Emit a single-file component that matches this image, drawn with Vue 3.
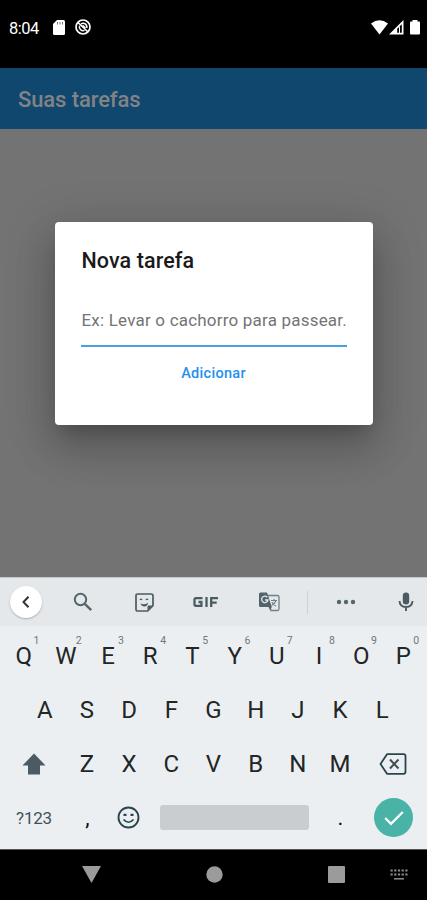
<template>
	<div class="phone">
		<header class="status">
			<span class="clock">8:04</span>
			<svg class="sd" viewBox="0 0 12 15">
				<path d="M4 0h6.500q1.500 0 1.500 1.500v12q0 1.500-1.500 1.500h-9q-1.500 0-1.500-1.500V4z" fill="#fff" />
				<path d="M4.500 2v2.500M7 2v2.500M9.500 2v2.500" stroke="#777" stroke-width="1" />
			</svg>
			<svg class="sync" viewBox="0 0 16 16" fill="none" stroke="#fff">
				<circle cx="8" cy="8" r="7" stroke-width="1.700" />
				<path d="M3 3.500l10 9.500" stroke-width="1.700" />
				<path d="M6 4.800a3.800 3.800 0 0 1 5.700 4.200M4.500 6.800a3.800 3.800 0 0 0 5 4.600M7.500 6.300l3 2.500" stroke-width="1.500" />
			</svg>
			<div class="status__right">
				<svg class="wifi" viewBox="0 0 17 15"><path d="M0 3.500Q8.500-3 17 3.500L8.500 14.500z" fill="#fff" /></svg>
				<svg class="signal" viewBox="0 0 15 15">
					<path d="M0 14.500L14.500 0v14.500z" fill="#fff" />
					<path d="M8.200 12.800V8.800l4.600-4.600v8.600z" fill="#000" />
					<path d="M10.500 6.500v6.500" stroke="#fff" stroke-width="1" />
				</svg>
				<svg class="battery" viewBox="0 0 10 15"><path d="M2.500 1.500V0h5v1.500H9q1 0 1 1V13.500q0 1-1 1H1q-1 0-1-1v-11q0-1 1-1z" fill="#fff" /></svg>
			</div>
		</header>

		<div class="appbar"><h1>Suas tarefas</h1></div>

		<main class="screen">
			<section class="dialog">
				<h2>Nova tarefa</h2>
				<div class="field"><span>Ex: Levar o cachorro para passear.</span></div>
				<button class="add">Adicionar</button>
			</section>
		</main>

		<section class="keyboard">
			<div class="tools">
				<span class="back">
					<svg width="10" height="14" viewBox="0 0 10 14"><path d="M7.500 1.800L2.500 7l5 5.200" fill="none" stroke="#303638" stroke-width="2" /></svg>
				</span>
				<svg width="20" height="20" viewBox="0 0 20 20" fill="none" stroke="#56666d">
					<circle cx="7.500" cy="7.500" r="5.700" stroke-width="2" />
					<path d="M11.800 11.800l6.400 6.400" stroke-width="2.400" />
				</svg>
				<svg width="19" height="19" viewBox="0 0 19 19" fill="none" stroke="#4b5b62">
					<path d="M2.700 1h13.600q1.700 0 1.700 1.700v10l-5.300 5.300h-10Q1 18 1 16.300V2.700Q1 1 2.700 1z" stroke-width="1.700" />
					<path d="M17.500 12.500h-3.800q-1.200 0-1.200 1.200v3.800z" fill="#4b5b62" stroke="none" />
					<path d="M5 6.800q1-1.500 2 0M11 6.800q1-1.500 2 0" stroke-width="1.300" />
					<path d="M5.500 10.500q4 1.800 7.500-.8-.5 3.800-3.500 3.800t-4-3z" fill="#4b5b62" stroke="none" />
				</svg>
				<svg class="gif" width="26" height="12" viewBox="0 0 26 12" fill="none" stroke="#4b5b62" stroke-width="2.300">
					<path d="M9.500 2.200H3q-1.500 0-1.500 1.500v4.600q0 1.500 1.500 1.500h5.400V6H5.500M13.500 1v10M18.200 11V2.200H25M18.200 6.600h5.500" />
				</svg>
				<svg width="21" height="20" viewBox="0 0 21 20">
					<path d="M8 3.500h10.500q1.500 0 1.500 1.500v12q0 1.500-1.500 1.500H12z" fill="#e5e8eb" stroke="#718087" stroke-width="1.300" />
					<path d="M1.500.500H8l1 3 3.800 11.500H1.500Q0 15 0 13.500V2Q0 .500 1.500.500z" fill="#52636a" />
					<path d="M8.300 5.300A3.200 3.200 0 1 0 9 8H6" fill="none" stroke="#e5e8eb" stroke-width="1.300" />
					<path d="M12 8.500h6M15 7v1.500M17 8.500q-1 3.500-4.500 5M13 10q1 2.500 4 4" fill="none" stroke="#718087" stroke-width="1.100" />
					<path d="M9.500 15h3.300L11 18z" fill="#52636a" />
				</svg>
				<i class="divider"></i>
				<svg width="20" height="6" viewBox="0 0 20 6" fill="#56666d">
					<circle cx="3" cy="3" r="2.200" /><circle cx="10" cy="3" r="2.200" /><circle cx="17" cy="3" r="2.200" />
				</svg>
				<svg width="16" height="20" viewBox="0 0 16 20">
					<rect x="4.800" y="0.500" width="6.400" height="12" rx="3.200" fill="#4b5b62" />
					<path d="M1.500 9q.300 6 6.500 6t6.500-6M8 15v4" fill="none" stroke="#4b5b62" stroke-width="1.900" />
				</svg>
			</div>

			<div class="keys">
				<div class="row row--top">
					<span v-for="(key, index) in topRow" :key="key" class="key">
						{{ key }}<sup>{{ (index + 1) % 10 }}</sup>
					</span>
				</div>
				<div class="row">
					<span v-for="key in middleRow" :key="key" class="key">{{ key }}</span>
				</div>
				<div class="row">
					<span class="wide">
						<svg width="24" height="22" viewBox="0 0 24 22"><path d="M12 .500L23.500 12.500H18V21.500H6V12.500H.500z" fill="#4a5b64" /></svg>
					</span>
					<span v-for="key in bottomRow" :key="key" class="key">{{ key }}</span>
					<span class="wide">
						<svg width="28" height="22" viewBox="0 0 28 22" fill="none">
							<path d="M8 1.200h16.500q2 0 2 2v15.600q0 2-2 2H8L1.500 11z" stroke="#29464f" stroke-width="1.800" stroke-linejoin="round" />
							<path d="M11 6.500l8.500 9M19.500 6.500l-8.500 9" stroke="#3d4e55" stroke-width="2" />
						</svg>
					</span>
				</div>
				<div class="row row--last">
					<span class="symbols">?123</span>
					<span class="comma">,</span>
					<svg class="smile" width="23" height="23" viewBox="0 0 23 23" fill="none" stroke="#29464f">
						<circle cx="11.500" cy="11.500" r="10" stroke-width="1.900" />
						<path d="M6.500 13.500q5 5.500 10 0" stroke-width="1.700" />
						<path d="M6.500 8.800h3M13.500 8.800h3" stroke-width="2.200" />
					</svg>
					<span class="space"></span>
					<span class="dot">.</span>
					<span class="enter">
						<svg width="20" height="16" viewBox="0 0 20 16"><path d="M1.200 8L7 13.800L18.800 2" fill="none" stroke="#fff" stroke-width="2.300" /></svg>
					</span>
				</div>
			</div>
		</section>

		<nav class="nav">
			<svg width="19" height="17" viewBox="0 0 19 17"><path d="M0 0h19L9.500 17z" fill="#9b9b9b" /></svg>
			<svg width="17" height="17" viewBox="0 0 17 17"><circle cx="8.500" cy="8.500" r="8.200" fill="#9b9b9b" /></svg>
			<svg width="17" height="17" viewBox="0 0 17 17"><rect width="17" height="17" rx="1" fill="#9b9b9b" /></svg>
			<svg width="18" height="11" viewBox="0 0 18 11" stroke="#8c8c8c" fill="none">
				<path d="M.500 1.500h17M.500 5.500h17" stroke-width="2.200" stroke-dasharray="2.200 1.500" />
				<path d="M4 9.800h10" stroke-width="1.500" />
			</svg>
		</nav>
	</div>
</template>

<script setup>
const topRow = [..."QWERTYUIOP"];
const middleRow = [..."ASDFGHJKL"];
const bottomRow = [..."ZXCVBNM"];
</script>

<style>
body {
	margin: 0;
	background: #000;
}
</style>

<style scoped>
.phone {
	display: flex;
	flex-direction: column;
	width: 427px;
	height: 900px;
	overflow: hidden;
	background: #000;
	font-family: Roboto, sans-serif;
}

svg {
	display: block;
	flex: none;
}

.status {
	display: flex;
	align-items: center;
	box-sizing: border-box;
	height: 68px;
	padding: 0 7px 14px 9px;
	color: #fff;
}

.clock {
	width: 44px;
	font-size: 16.5px;
	line-height: 20px;
	letter-spacing: -0.5px;
	padding-top: 3px;
}

.sd {
	width: 12px;
	height: 15px;
}

.sync {
	width: 16px;
	height: 16px;
	margin-left: 10px;
}

.status__right {
	display: flex;
	margin-left: auto;
}

.wifi {
	width: 17px;
	height: 15px;
}

.signal {
	width: 15px;
	height: 15px;
	margin-left: 1px;
}

.battery {
	width: 10px;
	height: 15px;
	margin-left: 6px;
}

.appbar {
	display: flex;
	align-items: center;
	box-sizing: border-box;
	height: 61px;
	padding: 2px 0 0 18px;
	background: #10476f;
}

h1,
h2 {
	margin: 0;
	font-weight: 500;
}

h1 {
	color: #828384;
	font-size: 22px;
	letter-spacing: -0.1px;
}

.screen {
	display: flex;
	justify-content: center;
	align-items: flex-start;
	height: 448px;
	background: #737373;
}

.dialog {
	display: flex;
	flex-direction: column;
	align-items: center;
	box-sizing: border-box;
	width: 318px;
	height: 203px;
	margin-top: 93px;
	padding: 26px 26px 0;
	border-radius: 4px;
	background: #fff;
	box-shadow: 0 12px 16px -7px rgba(0, 0, 0, 0.2), 0 25px 40px 3px rgba(0, 0, 0, 0.14), 0 9px 48px 8px rgba(0, 0, 0, 0.12);
}

h2 {
	align-self: stretch;
	color: #1a1a1a;
	font-size: 21.5px;
	line-height: 26px;
	letter-spacing: 0.1px;
	padding-left: 1px;
}

.field {
	align-self: stretch;
	box-sizing: border-box;
	height: 49px;
	margin-top: 24px;
	padding: 10px 0 0 1px;
	border-bottom: 2px solid #489fe2;
	color: #747474;
	font-size: 17px;
	line-height: 24px;
	letter-spacing: 0.2px;
	white-space: nowrap;
}

.add {
	margin-top: 17px;
	padding: 0;
	border: 0;
	background: none;
	color: #2390ee;
	font: 500 14.5px/20px Roboto, sans-serif;
	letter-spacing: 0.3px;
}

.keyboard {
	height: 272px;
	background: #eceff1;
}

.tools {
	display: grid;
	grid-template-columns: 52px 62px 61px 62px 65px 10px 68px 52px;
	align-items: center;
	justify-items: center;
	box-sizing: border-box;
	height: 49px;
	border-top: 1px solid #c6c8ca;
	background: #e5e8eb;
}

.back {
	display: grid;
	place-items: center;
	width: 32px;
	height: 32px;
	border-radius: 50%;
	background: #fff;
	box-shadow: 0 1px 2px rgba(0, 0, 0, 0.25);
}

.divider {
	width: 1px;
	height: 23px;
	background: #cdd1d4;
}

.keys {
	display: grid;
	grid-template-rows: 58px 52px 56px 51px;
}

.row {
	display: flex;
	justify-content: center;
	align-items: center;
}

.row--top {
	padding-top: 2px;
}

.key {
	position: relative;
	width: 42.2px;
	color: #222627;
	font-size: 24px;
	line-height: 28px;
	text-align: center;
}

.key sup {
	position: absolute;
	top: -7px;
	left: 31px;
	color: #6d777c;
	font-size: 10.5px;
	line-height: 12px;
}

.wide {
	display: flex;
	justify-content: center;
	width: 63.5px;
}

.row--last {
	justify-content: flex-start;
}

.symbols {
	width: 68px;
	color: #40525b;
	font-size: 17px;
	letter-spacing: -0.2px;
	text-align: center;
}

.comma,
.dot {
	color: #111;
	font-size: 22px;
	text-align: center;
}

.comma {
	width: 39px;
}

.smile {
	margin-left: 10px;
}

.space {
	width: 149px;
	height: 25px;
	margin-left: 20px;
	border-radius: 3px;
	background: #c9cdd0;
}

.dot {
	width: 63px;
}

.enter {
	display: grid;
	place-items: center;
	width: 39px;
	height: 39px;
	margin-left: 2px;
	border-radius: 50%;
	background: #48b3a6;
}

.nav {
	display: grid;
	grid-template-columns: 60px 186px 59px 65px;
	align-items: center;
	justify-items: center;
	box-sizing: border-box;
	height: 51px;
	padding: 0 0 2px 61px;
	border-top: 1px solid #555;
}
</style>
